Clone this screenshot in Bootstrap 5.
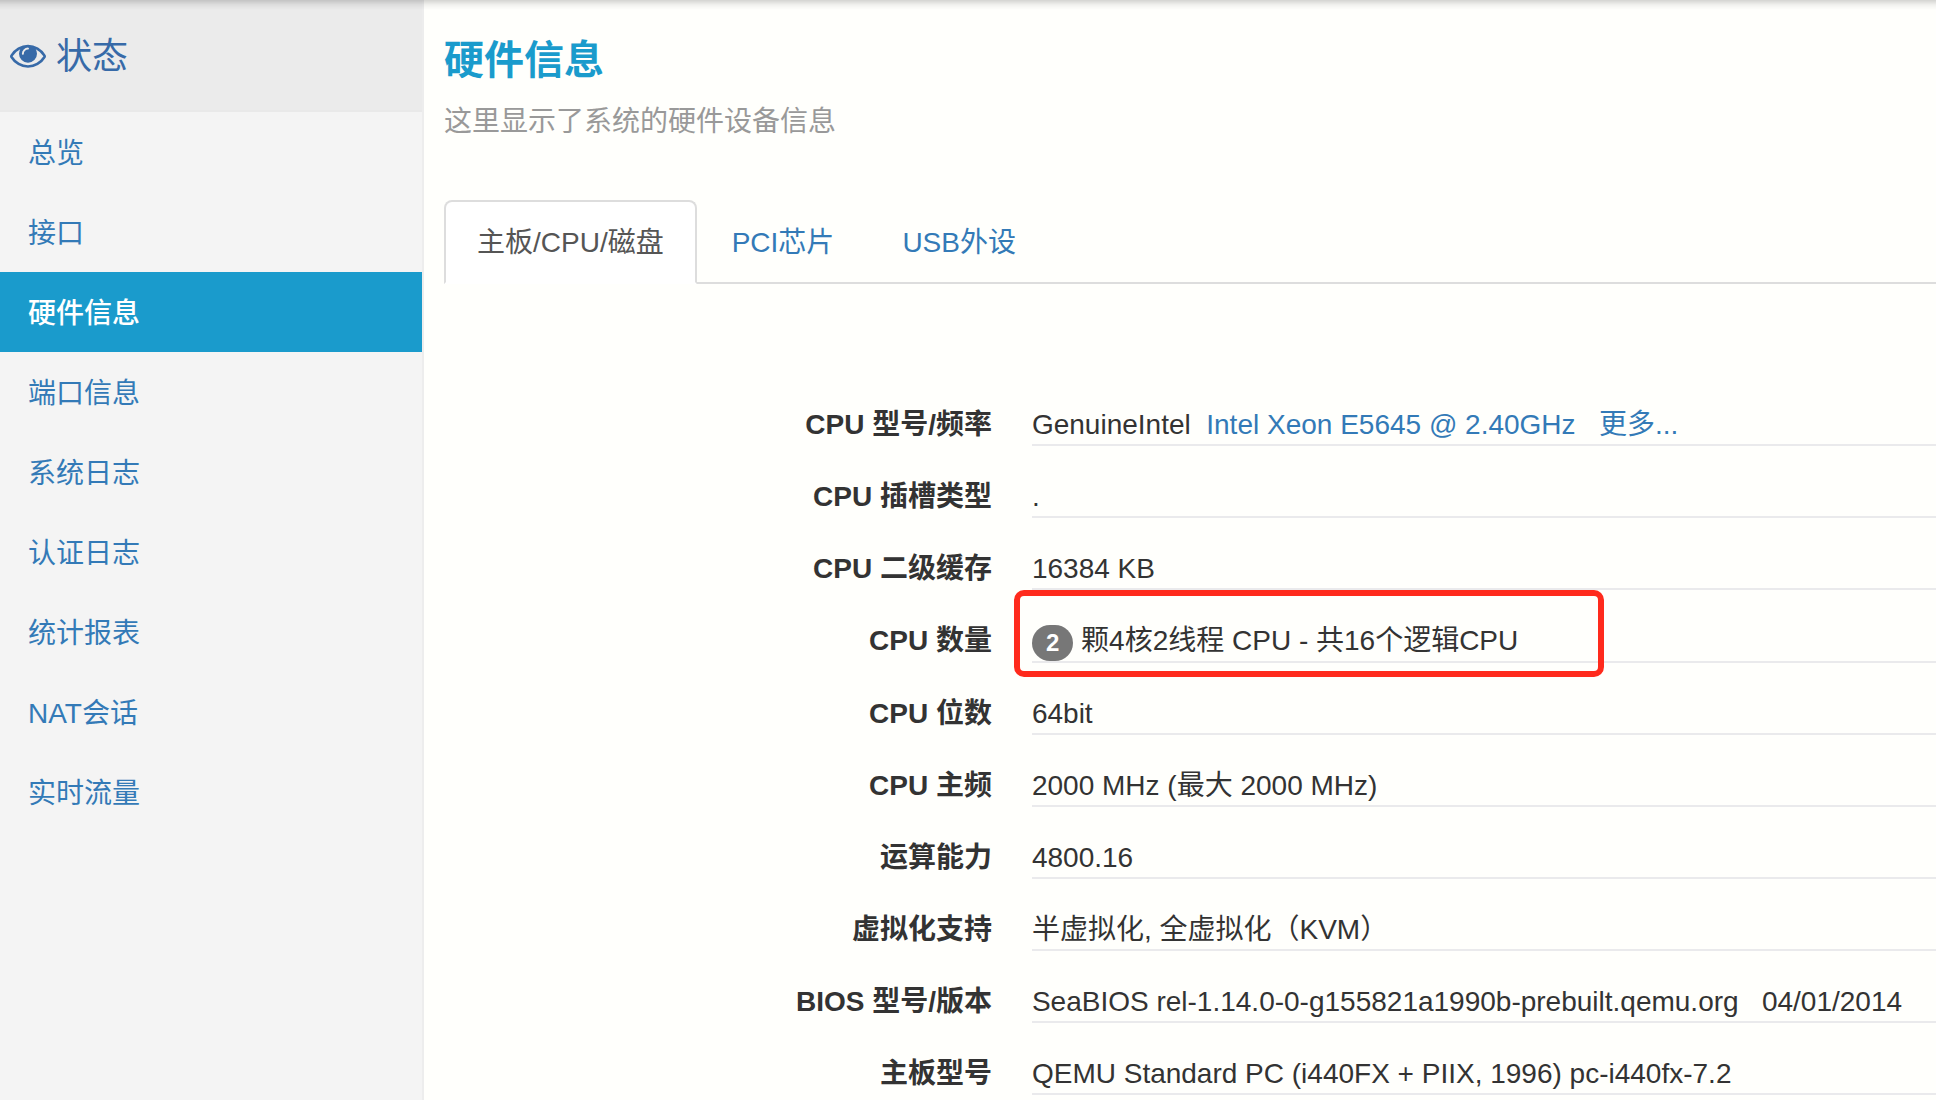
<!DOCTYPE html>
<html lang="zh-CN">
<head>
<meta charset="utf-8">
<meta name="viewport" content="width=device-width, initial-scale=1">
<title>硬件信息</title>
<link rel="stylesheet" href="https://cdn.jsdelivr.net/npm/bootstrap@5.3.0/dist/css/bootstrap.min.css">
<style>
  body {
    font-family: "Liberation Sans", "Noto Sans CJK SC", sans-serif;
    font-size: 28px;
    line-height: 40px;
    color: #333;
    background: #fffffc;
  }
  a { color: #337ab7; text-decoration: none; }
  /* shadow cast by the bar above the page */
  .top-shade {
    height: 10px;
    background: linear-gradient(rgba(0,0,0,.17), rgba(0,0,0,.05) 50%, rgba(0,0,0,0));
    pointer-events: none;
  }
  .side-menu { width: 424px; background: #f4f4f4; border-right: 2px solid #ededed; }
  .side-head {
    height: 112px;
    padding-left: 10px;
    gap: 10px;
    font-size: 36px;
    background: #ebebeb;
    border-bottom: 2px solid #e9e9e9;
    color: #376aa8;
  }
  .side-head span { padding-top: 4px; }
  .side-menu .nav-link { padding: 22px 28px 18px; color: #337ab7; border-radius: 0; }
  .side-menu .nav-link.active { background: #1a9bcc; color: #fff; font-weight: 500; }
  .main-area { padding: 38px 0 0 20px; }
  .page-title { font-size: 40px; line-height: 44px; color: #1a9bcc; margin-bottom: 20px; }
  .page-note { color: #999; margin-bottom: 58px; }
  .nav-tabs { --bs-nav-tabs-border-width: 2px; --bs-nav-tabs-border-color: #ddd; --bs-nav-tabs-border-radius: 8px; gap: 2px; margin-bottom: 120px; }
  .nav-tabs .nav-link { padding: 21px 31px 19px; color: #337ab7; }
  .nav-tabs .nav-link.active { color: #555; background: #fff; border-color: #ddd #ddd #fff; }
  .spec-list { display: grid; grid-template-columns: 20fr 33fr; column-gap: 40px; row-gap: 30px; line-height: 38px; }
  .spec-list dt { text-align: right; padding-top: 2px; }
  .spec-list dd { margin: 0; padding-top: 2px; border-bottom: 2px solid #eaeaec; white-space: nowrap; }
  .spec-list .count-badge {
    font-size: 24px;
    line-height: 24px;
    padding: 6px 14px;
    border-radius: 20px;
    background: #777;
    vertical-align: middle;
  }
  .mark-frame {
    left: -18px;
    top: -30px;
    width: 590px;
    height: 87px;
    border: 6px solid #ff2a1c;
    border-radius: 10px;
    pointer-events: none;
  }
</style>
</head>
<body>
<div class="top-shade position-fixed top-0 start-0 w-100 z-3"></div>
<div class="d-flex min-vh-100">
  <aside class="side-menu flex-shrink-0">
    <a class="side-head d-flex align-items-center" href="#">
      <svg width="36" height="36" viewBox="0 0 1792 1792" fill="currentColor" aria-hidden="true"><path d="M1664 960q-152-236-381-353 61 104 61 225 0 185-131.500 316.500t-316.500 131.500-316.500-131.500-131.500-316.500q0-121 61-225-229 117-381 353 133 205 333.500 326.500t434.500 121.500 434.500-121.500 333.500-326.500z" fill="none" stroke="none"/><path fill-rule="evenodd" d="M1792 960q0 34-20 69-140 230-376.500 368.500t-499.500 138.500-499.500-139-376.500-368q-20-35-20-69t20-69q140-229 376.500-368t499.500-139 499.500 139 376.500 368q20 35 20 69zM1664 960q-152-236-381-353 61 104 61 225 0 185-131.500 316.500t-316.500 131.500-316.500-131.500-131.500-316.500q0-121 61-225-229 117-381 353 133 205 333.500 326.500t434.500 121.500 434.500-121.500 333.500-326.500zM944 576q0-20-14-34t-34-14q-125 0-214.500 89.500t-89.500 214.500q0 20 14 34t34 14 34-14 14-34q0-86 61-147t147-61q20 0 34-14t14-34z"/></svg>
      <span>状态</span>
    </a>
    <nav class="nav nav-pills flex-column">
      <a class="nav-link" href="#">总览</a>
      <a class="nav-link" href="#">接口</a>
      <a class="nav-link active" aria-current="page" href="#">硬件信息</a>
      <a class="nav-link" href="#">端口信息</a>
      <a class="nav-link" href="#">系统日志</a>
      <a class="nav-link" href="#">认证日志</a>
      <a class="nav-link" href="#">统计报表</a>
      <a class="nav-link" href="#">NAT会话</a>
      <a class="nav-link" href="#">实时流量</a>
    </nav>
  </aside>
  <main class="main-area flex-grow-1">
    <h1 class="page-title fw-bold">硬件信息</h1>
    <p class="page-note">这里显示了系统的硬件设备信息</p>
    <ul class="nav nav-tabs">
      <li class="nav-item"><a class="nav-link active" aria-current="true" href="#">主板/CPU/磁盘</a></li>
      <li class="nav-item"><a class="nav-link" href="#">PCI芯片</a></li>
      <li class="nav-item"><a class="nav-link" href="#">USB外设</a></li>
    </ul>
    <dl class="spec-list mb-0">
      <dt>CPU 型号/频率</dt>
      <dd>GenuineIntel&nbsp; <a href="#">Intel Xeon E5645 @ 2.40GHz</a>&nbsp;&nbsp; <a href="#">更多...</a></dd>
      <dt>CPU 插槽类型</dt>
      <dd>.</dd>
      <dt>CPU 二级缓存</dt>
      <dd>16384 KB</dd>
      <dt>CPU 数量</dt>
      <dd class="position-relative"><span class="badge count-badge">2</span> 颗4核2线程 CPU - 共16个逻辑CPU<span class="mark-frame position-absolute"></span></dd>
      <dt>CPU 位数</dt>
      <dd>64bit</dd>
      <dt>CPU 主频</dt>
      <dd>2000 MHz (最大 2000 MHz)</dd>
      <dt>运算能力</dt>
      <dd>4800.16</dd>
      <dt>虚拟化支持</dt>
      <dd>半虚拟化, 全虚拟化（KVM）</dd>
      <dt>BIOS 型号/版本</dt>
      <dd>SeaBIOS rel-1.14.0-0-g155821a1990b-prebuilt.qemu.org&nbsp;&nbsp; 04/01/2014</dd>
      <dt>主板型号</dt>
      <dd>QEMU Standard PC (i440FX + PIIX, 1996) pc-i440fx-7.2</dd>
    </dl>
  </main>
</div>
<script src="https://cdn.jsdelivr.net/npm/bootstrap@5.3.0/dist/js/bootstrap.bundle.min.js"></script>
</body>
</html>
